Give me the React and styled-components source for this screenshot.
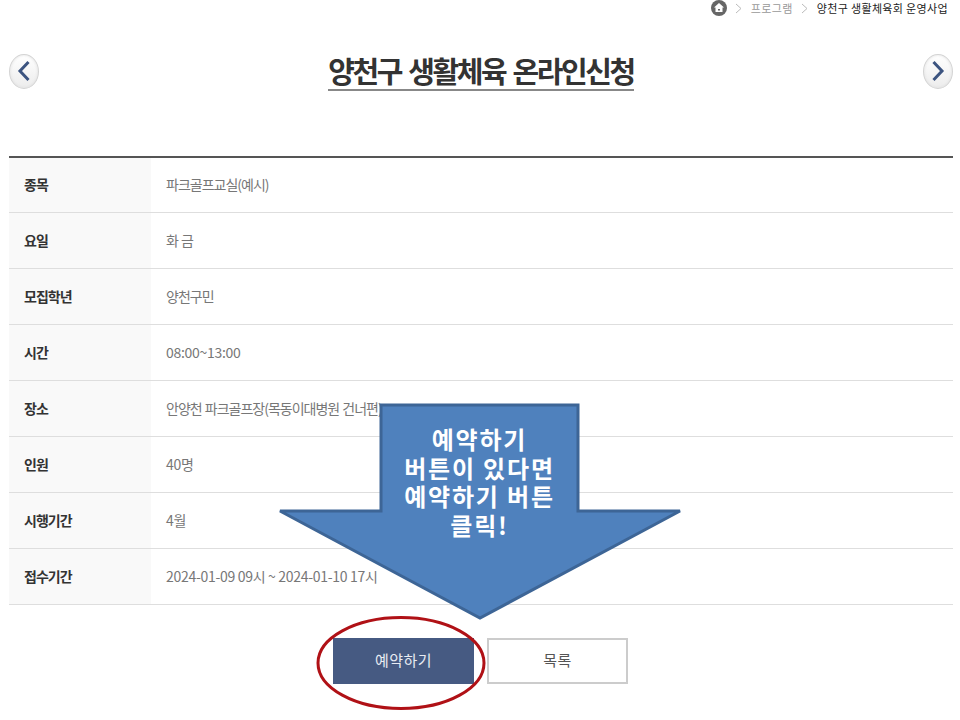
import React from "react";
import styled, { createGlobalStyle } from "styled-components";

const Global = createGlobalStyle`
  html, body { margin: 0; padding: 0; background: #fff; }
  body { font-family: "Noto Sans CJK KR", "Noto Sans", sans-serif; }
`;

const Page = styled.div`
  position: relative;
  width: 960px;
  height: 720px;
  overflow: hidden;
  box-sizing: border-box;
  padding: 0 7px 0 9px;
`;

const Crumbs = styled.nav`
  display: flex;
  justify-content: flex-end;
  align-items: center;
  height: 16px;
  padding-right: 5px;
  font-size: 11px;
  letter-spacing: 0.35px;
  color: #222;
`;

const CrumbLink = styled.span`
  color: #999;
`;

const CrumbSep = styled.svg`
  width: 7px;
  height: 11px;
  margin: 0 9px 0 8px;
  fill: none;
  stroke: #bbb;
  stroke-width: 1;
`;

const HomeIcon = styled.svg`
  width: 16px;
  height: 16px;
`;

const TitleRow = styled.header`
  display: flex;
  justify-content: space-between;
  align-items: center;
  height: 110px;
`;

const NavButton = styled.div`
  width: 30px;
  height: 35px;
  border-radius: 50%;
  box-sizing: border-box;
  border: 1px solid #d4d4d4;
  background: linear-gradient(#fff, #ececec);
  box-shadow: inset 0 0 3px #ddd;
  display: flex;
  align-items: center;
  justify-content: center;
`;

const Chevron = styled.svg`
  width: 14px;
  height: 22px;
  fill: none;
  stroke: #3c5480;
  stroke-width: 3;
`;

const Title = styled.h1`
  margin: 0;
  font-size: 29px;
  line-height: 37px;
  font-weight: 700;
  letter-spacing: -2.4px;
  word-spacing: 3px;
  color: #333;
  border-bottom: 2px solid #888;
`;

const Table = styled.div`
  margin-top: 30px;
  border-top: 2px solid #555;
`;

const Row = styled.div`
  display: flex;
  height: 56px;
  box-sizing: border-box;
  border-bottom: 1px solid #dedede;
  font-size: 14px;

  &:first-child {
    height: 55px;
  }
`;

const Label = styled.div`
  width: 142px;
  box-sizing: border-box;
  padding: 0 0 2px 15px;
  background: #f9f9f9;
  display: flex;
  align-items: center;
  font-weight: 700;
  letter-spacing: -1px;
  color: #333;
`;

const Value = styled.div`
  padding: 0 0 2px 15px;
  display: flex;
  align-items: center;
  letter-spacing: ${(p) => (p.$numeric ? "-0.3px" : "-1px")};
  word-spacing: ${(p) => (p.$numeric ? "0" : "1px")};
  color: #777;
`;

const Actions = styled.div`
  display: flex;
  justify-content: center;
  gap: 13px;
  margin-top: 33px;
  margin-left: -1px;
`;

const ActionButton = styled.div`
  width: 141px;
  height: 46px;
  box-sizing: border-box;
  padding-bottom: 3px;
  display: flex;
  align-items: center;
  justify-content: center;
  font-size: 15px;
  letter-spacing: 0.4px;
  background: ${(p) => (p.$primary ? "#465a82" : "#fff")};
  color: ${(p) => (p.$primary ? "#e8ebf2" : "#555")};
  border: ${(p) => (p.$primary ? "1px solid #465a82" : "2px solid #ccc")};
`;

const Overlay = styled.svg`
  position: absolute;
  left: 0;
  top: 0;
  width: 960px;
  height: 720px;
  pointer-events: none;
`;

const Callout = styled.div`
  position: absolute;
  left: 381px;
  top: 425px;
  width: 197px;
  text-align: center;
  color: #fff;
  font-size: 24px;
  line-height: 28.7px;
  font-weight: 700;
  font-family: "Noto Sans CJK KR", sans-serif;
  letter-spacing: 1.8px;
`;

const rows = [
  ["종목", "파크골프교실(예시)"],
  ["요일", "화 금"],
  ["모집학년", "양천구민"],
  ["시간", "08:00~13:00", true],
  ["장소", "안양천 파크골프장(목동이대병원 건너편)"],
  ["인원", "40명", true],
  ["시행기간", "4월", true],
  ["접수기간", "2024-01-09 09시 ~ 2024-01-10 17시", true],
];

const Sep = () => (
  <CrumbSep viewBox="0 0 7 11">
    <path d="M1 1l5 4.500-5 4.500" />
  </CrumbSep>
);

export default function App() {
  return (
    <Page>
      <Global />
      <Crumbs>
        <HomeIcon viewBox="0 0 16 16">
          <circle cx="8" cy="8" r="8" fill="#666" />
          <path d="M8 3L3 7.500h1.500V12h7V7.500H13z" fill="#fff" />
          <rect x="7" y="9" width="2" height="1.500" fill="#666" />
        </HomeIcon>
        <Sep />
        <CrumbLink>프로그램</CrumbLink>
        <Sep />
        <span>양천구 생활체육회 운영사업</span>
      </Crumbs>
      <TitleRow>
        <NavButton>
          <Chevron viewBox="0 0 14 22">
            <path d="M11.500 2L3 11l8.500 9" />
          </Chevron>
        </NavButton>
        <Title>양천구 생활체육 온라인신청</Title>
        <NavButton>
          <Chevron viewBox="0 0 14 22">
            <path d="M2.500 2L11 11l-8.500 9" />
          </Chevron>
        </NavButton>
      </TitleRow>
      <Table>
        {rows.map(([k, v, numeric]) => (
          <Row key={k}>
            <Label>{k}</Label>
            <Value $numeric={numeric}>{v}</Value>
          </Row>
        ))}
      </Table>
      <Actions>
        <ActionButton $primary>예약하기</ActionButton>
        <ActionButton>목록</ActionButton>
      </Actions>
      <Overlay viewBox="0 0 960 720">
        <polygon
          points="381,405 578,405 578,511 680,511 480,618 280,511 381,511"
          fill="#4f81bd"
          stroke="#3d6596"
          strokeWidth="3"
        />
        <ellipse cx="401" cy="663" rx="83" ry="45.500" fill="none" stroke="#b01116" strokeWidth="3" />
      </Overlay>
      <Callout>
        예약하기
        <br />
        버튼이 있다면
        <br />
        예약하기 버튼
        <br />
        클릭!
      </Callout>
    </Page>
  );
}
